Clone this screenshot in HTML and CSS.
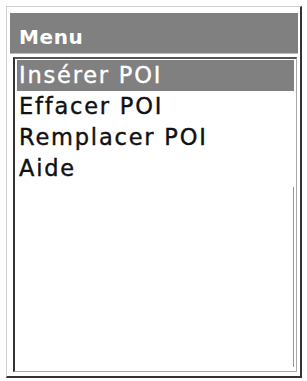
FILE: index.html
```html
<!DOCTYPE html>
<html lang="fr">
<head>
    <meta charset="UTF-8">
    <meta name="viewport" content="width=device-width, initial-scale=1.0">
    <title>Menu</title>
    <link rel="stylesheet" href="styles.css">
</head>
<body>
    <div class="window">
        <div class="title-bar">Menu</div>
        <div class="menu-list">
            <div class="item selected">Insérer POI</div>
            <div class="item">Effacer POI</div>
            <div class="item">Remplacer POI</div>
            <div class="item">Aide</div>
            <div class="scroll-line"></div>
        </div>
    </div>
</body>
</html>
```

FILE: styles.css
```css
body {
    margin: 0;
    background-color: #fff;
    font-family: "DejaVu Sans", sans-serif;
}

.window {
    margin: 6px 5px 3px 6px;
    height: 372px;
    border: 1px solid #d0d0d0;
    border-right: 2px solid #333;
    border-bottom: 2px solid #333;
    padding: 6px 2px 4px 3px;
    display: flex;
    flex-direction: column;
    box-sizing: border-box;
}

.title-bar {
    background-color: #808080;
    color: #fff;
    font-weight: bold;
    font-size: 20px;
    letter-spacing: 0.6px;
    height: 40px;
    line-height: 48px;
    padding-left: 9px;
    border-bottom: 1px solid #bbb;
}

.menu-list {
    position: relative;
    flex: 1;
    margin: 3px 1px 0 3px;
    border: 1px solid #aaa;
    border-left: 2px solid #333;
    border-top: 2px solid #555;
    padding: 1px 2px 4px 2px;
}

.item {
    height: 31px;
    line-height: 31px;
    font-size: 22.5px;
    letter-spacing: 1.8px;
    color: #111;
    padding-left: 2px;
    -webkit-text-stroke: 0.4px currentColor;
}

.selected {
    background-color: #808080;
    color: #fff;
}

.scroll-line {
    position: absolute;
    right: 2px;
    top: 128px;
    bottom: 4px;
    width: 1px;
    background-color: #999;
}
```
